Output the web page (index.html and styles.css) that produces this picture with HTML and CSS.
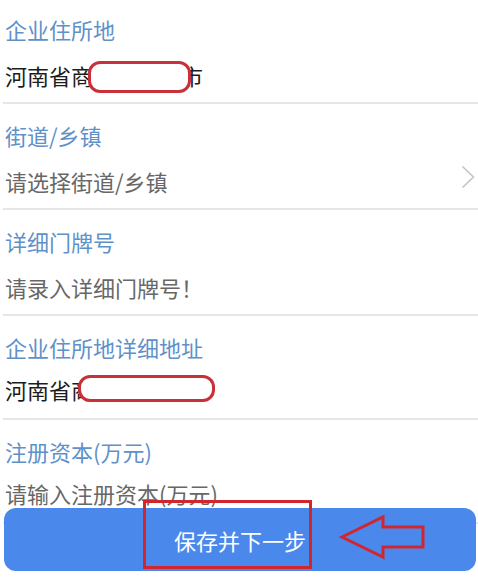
FILE: index.html
```html
<!DOCTYPE html>
<html lang="zh-CN">
<head>
    <meta charset="UTF-8">
    <meta name="viewport" content="width=device-width, initial-scale=1.0">
    <title>企业住所信息</title>
    <link rel="stylesheet" href="styles.css">
</head>
<body>
    <div class="form">
        <div class="field first">
            <div class="label">企业住所地</div>
            <div class="value">河南省商<span class="hidden-part"></span>市</div>
        </div>
        <div class="field">
            <div class="label">街道/乡镇</div>
            <div class="value placeholder select">
                <span>请选择街道/乡镇</span>
                <svg class="chevron" width="14" height="24" viewBox="0 0 14 24">
                    <polyline points="1.5,1.5 12.5,12 1.5,22.5" fill="none" stroke="#c4c4c4" stroke-width="1.6"/>
                </svg>
            </div>
        </div>
        <div class="field">
            <div class="label">详细门牌号</div>
            <div class="value placeholder">请录入详细门牌号！</div>
        </div>
        <div class="field short">
            <div class="label">企业住所地详细地址</div>
            <div class="value">河南省商</div>
        </div>
        <div class="field short">
            <div class="label">注册资本(万元)</div>
            <div class="value placeholder">请输入注册资本(万元)</div>
        </div>
    </div>

    <button class="next-btn">保存并下一步</button>

    <!-- annotations drawn on top of the screenshot -->
    <div class="oval oval-1"></div>
    <div class="oval oval-2"></div>
    <div class="mark-box"></div>
    <svg class="mark-arrow" width="90" height="46" viewBox="0 0 90 46">
        <polygon points="4,23 45,3 45,13 85,13 85,33 45,33 45,43" fill="none" stroke="#d2262f" stroke-width="3" stroke-linejoin="miter"/>
    </svg>
</body>
</html>
```

FILE: styles.css
```css
* { box-sizing: border-box; margin: 0; padding: 0; }
body {
    background: #fff;
    font-family: "Noto Sans CJK SC", "Noto Sans", sans-serif;
    font-size: 22px;
    overflow: hidden;
}
.form { margin-left: 3px; }
.field {
    padding: 16px 3px 12px 2px;
    border-bottom: 2px solid #e6e6e6;
    display: flex; flex-direction: column; gap: 16px;
}
.field.first { padding-top: 14px; }
.field.short { gap: 12px; padding-bottom: 14px; }
.label { color: #5f91c9; line-height: 30px; }
.value { color: #1c1c1c; line-height: 30px; white-space: nowrap; }
.value.placeholder { color: #676767; }
.value.select { display: flex; justify-content: space-between; align-items: center; }
.hidden-part { display: inline-block; width: 88px; }
.chevron { display: block; margin-top: -8px; }

.next-btn {
    position: fixed; left: 4px; right: 2px; bottom: 8px; height: 63px;
    border: none; border-radius: 12px; background: #4a88ec; color: #fff;
    font-family: inherit; font-size: 22px;
    display: flex; align-items: center; justify-content: center;
}

.oval {
    position: absolute; background: #fff;
    border: 3px solid #c8313a; border-radius: 12px;
}
.oval-1 { left: 88px; top: 61px; width: 103px; height: 32px; }
.oval-2 { left: 78px; top: 375px; width: 137px; height: 27px; }
.mark-box {
    position: absolute; left: 143px; top: 500px; width: 169px; height: 69px;
    border: 3px solid #d2262f;
}
.mark-arrow { position: absolute; left: 338px; top: 514px; }
```
